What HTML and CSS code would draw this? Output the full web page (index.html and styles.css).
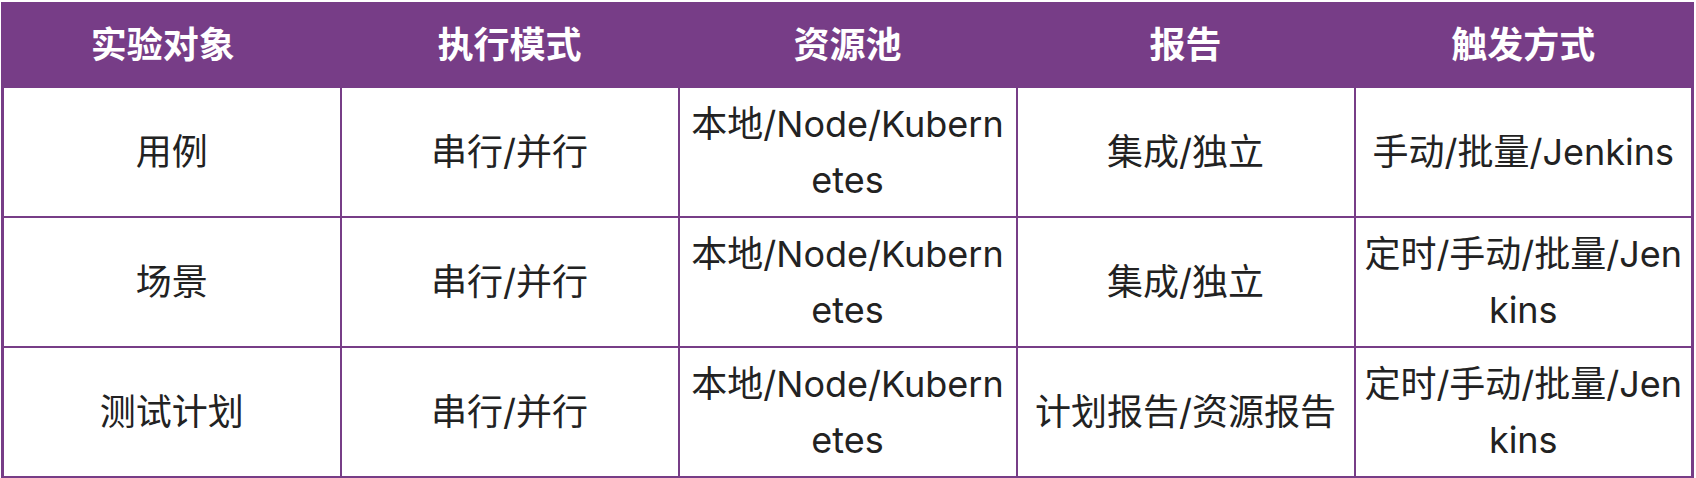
FILE: index.html
```html
<!DOCTYPE html>
<html lang="zh-CN">
<head>
<meta charset="utf-8">
<title>实验对象</title>
<link rel="stylesheet" href="styles.css">
</head>
<body>
<table class="grid">
  <colgroup>
    <col class="c"><col class="c"><col class="c"><col class="c"><col class="c">
  </colgroup>
  <thead>
    <tr>
      <th class="first">实验对象</th>
      <th>执行模式</th>
      <th>资源池</th>
      <th>报告</th>
      <th>触发方式</th>
    </tr>
  </thead>
  <tbody>
    <tr>
      <td>用例</td>
      <td>串行/并行</td>
      <td>本地/Node/Kubernetes</td>
      <td>集成/独立</td>
      <td>手动/批量/Jenkins</td>
    </tr>
    <tr>
      <td>场景</td>
      <td>串行/并行</td>
      <td>本地/Node/Kubernetes</td>
      <td>集成/独立</td>
      <td>定时/手动/批量/Jenkins</td>
    </tr>
    <tr>
      <td>测试计划</td>
      <td>串行/并行</td>
      <td>本地/Node/Kubernetes</td>
      <td>计划报告/资源报告</td>
      <td>定时/手动/批量/Jenkins</td>
    </tr>
  </tbody>
</table>
</body>
</html>
```

FILE: styles.css
```css
html, body {
  margin: 0;
  padding: 0;
  background: #ffffff;
}

body {
  font-family: Inter, "Noto Sans CJK SC", sans-serif;
  color: #222222;
}

.grid {
  margin: 2px 0 0 1px;
  width: 1693px;
  table-layout: fixed;
  border-collapse: collapse;
  border: 3px solid #773d87;
}

.grid .c {
  width: 20%;
}

.grid th,
.grid td {
  border: 2px solid #773d87;
  text-align: center;
  vertical-align: middle;
  font-size: 36px;
  line-height: 56px;
  word-break: break-all;
}

.grid th {
  background: #773d87;
  color: #ffffff;
  font-weight: 700;
  padding: 12px 8px 13px;
}

.grid th.first {
  padding-right: 26px;
}

.grid td {
  padding: 8px 8px;
}
```
